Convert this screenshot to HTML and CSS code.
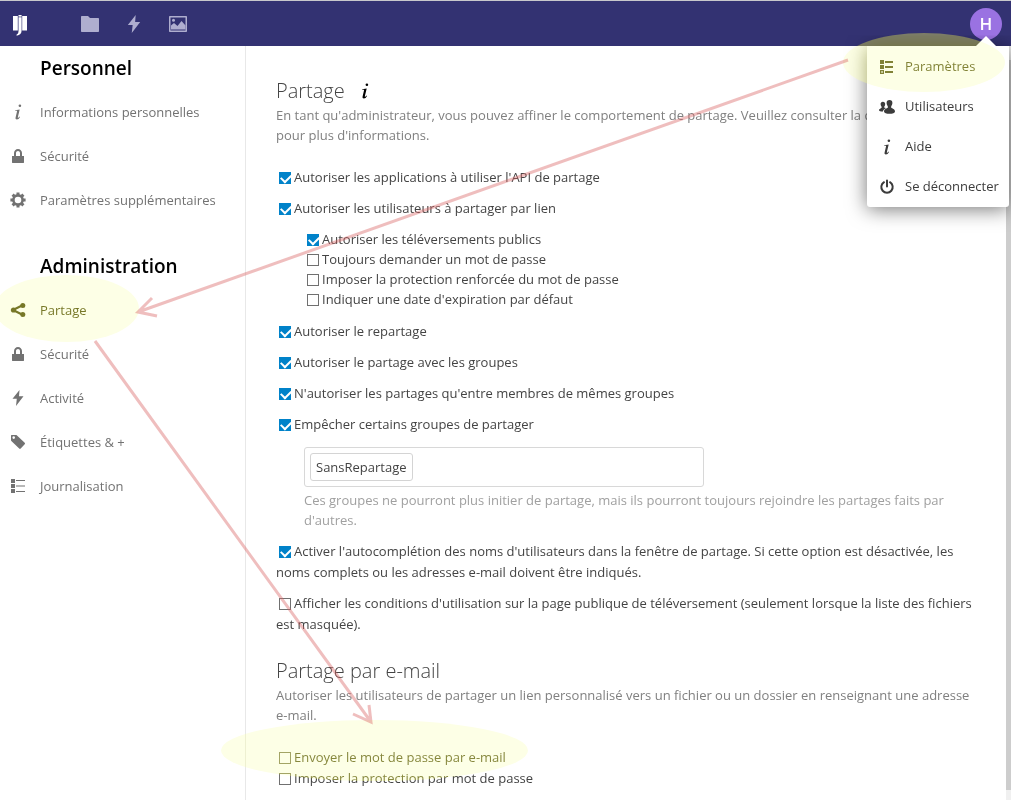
FILE: index.html
```html
<!DOCTYPE html>
<html lang="fr">
<head>
<meta charset="utf-8">
<title>Partage - Paramètres</title>
<link rel="stylesheet" href="styles.css">
</head>
<body>
<svg class="sprite" aria-hidden="true">
  <symbol id="i-info" viewBox="0 0 16 16"><circle cx="9.900" cy="1.800" r="1.300"/><path d="M5.200 6.200 9.700 5.400 7.900 13c-.2.8 0 1 .4.8.4-.2.8-.7 1.200-1.200l.5.4C9.100 14.700 8.100 15.500 6.900 15.500c-1.100 0-1.600-.8-1.300-2L7 7.600c.2-.7 0-.9-.5-.9H5.100z"/></symbol>
  <symbol id="i-lock" viewBox="0 0 16 16"><path d="M8 1C5.800 1 4 2.800 4 5v3H2v6.500c0 .3.2.5.5.5h11c.3 0 .5-.2.5-.5V8h-2V5c0-2.200-1.800-4-4-4zm0 2c1.100 0 2 .9 2 2v3H6V5c0-1.100.9-2 2-2z"/></symbol>
  <symbol id="i-gear" viewBox="0 0 16 16"><circle cx="8" cy="8" r="4.600" fill="none" stroke="currentColor" stroke-width="2.600"/><path fill="none" stroke="currentColor" stroke-width="3" d="M8 .4v2.800M8 12.800v2.800M.4 8h2.800M12.800 8h2.800M2.600 2.600l2 2M11.400 11.400l2 2M13.400 2.600l-2 2M4.600 11.400l-2 2"/></symbol>
  <symbol id="i-share" viewBox="0 0 16 16"><path fill="none" stroke="currentColor" stroke-width="2.200" d="M13 3 3 8l10 5"/><circle cx="3.500" cy="8" r="2.600"/><circle cx="12.800" cy="3.500" r="2.500"/><circle cx="12.800" cy="12.500" r="2.500"/></symbol>
  <symbol id="i-bolt" viewBox="0 0 16 16"><path d="M9.500 0 2.500 8.800h4.300L6 16l7.500-9.800H9z"/></symbol>
  <symbol id="i-tag" viewBox="0 0 16 16"><path fill-rule="evenodd" d="M1.600 1h4.200c.5 0 .8.100 1.200.5l7.700 7.300c.5.500.5 1 0 1.500l-4 4.200c-.5.500-1 .5-1.500 0L1.600 7.200C1.100 6.800 1 6.400 1 5.900V1.600C1 1.200 1.200 1 1.600 1zM3.700 2.300a1.300 1.300 0 1 0 0 2.600 1.300 1.300 0 0 0 0-2.600z"/></symbol>
  <symbol id="i-list" viewBox="0 0 16 16"><path d="M1 1h4v4H1zM1 6h4v4H1zM1 11h4v4H1zM6 2h9v1H6zM6 7.500h9v1H6zM6 13h9v1H6z"/></symbol>
  <symbol id="i-settings" viewBox="0 0 16 16"><path fill-rule="evenodd" d="M1 1h4v4H1zM1 6h4v4H1zM1 11h4v4H1zM2.300 12.300v1.500h1.500v-1.500zM6 2h8v2H6zM6 7h8v2H6zM6 12h8v2H6z"/></symbol>
  <symbol id="i-users" viewBox="0 0 16 16"><path d="M10.500 1C8.600 1 7.500 2.300 7.600 4c.1 1.500.6 2.500 1.200 3.200v1.600C8 9.600 5 10 5 12.400c0 1.400 2.500 2.300 5.500 2.300s5.500-.9 5.500-2.300C16 10 13 9.600 12.200 8.800V7.200c.6-.7 1.100-1.700 1.200-3.200.1-1.700-1-3-2.900-3z"/><path d="M3.900 2.800c-1.500 0-2.400 1-2.300 2.400.1 1.200.5 2 1 2.500v1C2 9.400 0 9.500 0 11.200c0 .8 1.500 1.300 4 1.300.2-1.700 1.500-2.700 3.200-3.500-.7-.1-1.700-.1-2-.5V7.700c.5-.5.9-1.300 1-2.500.1-1.400-.8-2.400-2.300-2.400z"/></symbol>
  <symbol id="i-power" viewBox="0 0 16 16"><path fill="none" stroke="currentColor" stroke-width="2" stroke-linecap="round" d="M8 1.500v6M5 3.200a5.700 5.700 0 1 0 6 0"/></symbol>
  <symbol id="i-folder" viewBox="0 0 18 16"><path d="M1 0h6l2 2h8c.6 0 1 .4 1 1v12c0 .6-.4 1-1 1H1c-.6 0-1-.4-1-1V1c0-.6.4-1 1-1z"/></symbol>
  <symbol id="i-picture" viewBox="0 0 18 16"><path fill-rule="evenodd" d="M1 0h16c.6 0 1 .4 1 1v14c0 .6-.4 1-1 1H1c-.6 0-1-.4-1-1V1c0-.6.4-1 1-1zM1.500 1.500v13h15v-13z"/><path d="M2 13.500V9.500l3-2.500 3.500 3 4-5 4 4.500v4z"/><circle cx="4.500" cy="4.300" r="1.500"/></symbol>
  <symbol id="i-logo" viewBox="0 0 16 24"><path d="M1 4h4.800v14.500H1zM10.200 4H15v14.500h-4.800zM6.500 5.300h3.100v13.200c0 2.900-1.600 4.700-5 5.300v-1.300c1.300-.6 1.900-1.600 1.900-3.500z"/><path d="M6.500 3h3.100v1.600H6.500z"/></symbol>
</svg>

<header class="topbar">
  <a class="logo" href="#" aria-label="Accueil"><svg><use href="#i-logo"/></svg></a>
  <nav class="apps" aria-label="Applications">
    <a href="#" aria-label="Fichiers"><svg><use href="#i-folder"/></svg></a>
    <a href="#" aria-label="Activité"><svg><use href="#i-bolt"/></svg></a>
    <a href="#" aria-label="Galerie"><svg><use href="#i-picture"/></svg></a>
  </nav>
  <div class="account">
    <button class="avatar" type="button">H</button>
    <nav class="menu" aria-label="Compte">
      <a href="#"><svg><use href="#i-settings"/></svg>Paramètres</a>
      <a href="#"><svg><use href="#i-users"/></svg>Utilisateurs</a>
      <a href="#"><svg><use href="#i-info"/></svg>Aide</a>
      <a href="#"><svg><use href="#i-power"/></svg>Se déconnecter</a>
    </nav>
  </div>
</header>

<div class="layout">
  <nav class="sidebar" aria-label="Paramètres">
    <h2>Personnel</h2>
    <ul>
      <li><a href="#"><svg><use href="#i-info"/></svg>Informations personnelles</a></li>
      <li><a href="#"><svg><use href="#i-lock"/></svg>Sécurité</a></li>
      <li><a href="#"><svg><use href="#i-gear"/></svg>Paramètres supplémentaires</a></li>
    </ul>
    <h2>Administration</h2>
    <ul>
      <li><a class="active" href="#"><svg><use href="#i-share"/></svg>Partage</a></li>
      <li><a href="#"><svg><use href="#i-lock"/></svg>Sécurité</a></li>
      <li><a href="#"><svg><use href="#i-bolt"/></svg>Activité</a></li>
      <li><a href="#"><svg><use href="#i-tag"/></svg>Étiquettes &amp; +</a></li>
      <li><a href="#"><svg><use href="#i-list"/></svg>Journalisation</a></li>
    </ul>
  </nav>

  <main class="content">
    <section>
      <h2>Partage <a class="help" href="#" aria-label="Documentation"><svg><use href="#i-info"/></svg></a></h2>
      <p class="hint">En tant qu'administrateur, vous pouvez affiner le comportement de partage. Veuillez consulter la documentation pour plus d'informations.</p>
      <div class="options">
        <label><input type="checkbox" checked>Autoriser les applications à utiliser l'API de partage</label>
        <label><input type="checkbox" checked>Autoriser les utilisateurs à partager par lien</label>
        <div class="suboptions">
          <label><input type="checkbox" checked>Autoriser les téléversements publics</label>
          <label><input type="checkbox">Toujours demander un mot de passe</label>
          <label><input type="checkbox">Imposer la protection renforcée du mot de passe</label>
          <label><input type="checkbox">Indiquer une date d'expiration par défaut</label>
        </div>
        <label><input type="checkbox" checked>Autoriser le repartage</label>
        <label><input type="checkbox" checked>Autoriser le partage avec les groupes</label>
        <label><input type="checkbox" checked>N'autoriser les partages qu'entre membres de mêmes groupes</label>
        <label><input type="checkbox" checked>Empêcher certains groupes de partager</label>
        <div class="groups">
          <div class="picker"><span class="chip">SansRepartage</span><input type="text" aria-label="Groupes exclus du partage"></div>
          <p>Ces groupes ne pourront plus initier de partage, mais ils pourront toujours rejoindre les partages faits par d'autres.</p>
        </div>
        <label><input type="checkbox" checked>Activer l'autocomplétion des noms d'utilisateurs dans la fenêtre de partage. Si cette option est désactivée, les noms complets ou les adresses e-mail doivent être indiqués.</label>
        <label><input type="checkbox">Afficher les conditions d'utilisation sur la page publique de téléversement (seulement lorsque la liste des fichiers est masquée).</label>
      </div>
    </section>
    <section>
      <h2>Partage par e-mail</h2>
      <p class="hint">Autoriser les utilisateurs de partager un lien personnalisé vers un fichier ou un dossier en renseignant une adresse e-mail.</p>
      <div class="options tight">
        <label><input type="checkbox">Envoyer le mot de passe par e-mail</label>
        <label><input type="checkbox">Imposer la protection par mot de passe</label>
      </div>
    </section>
  </main>
  <div class="scroll" aria-hidden="true"><div class="thumb"></div></div>
</div>

<div class="halo glow on-menu"></div><div class="halo tint on-menu"></div>
<div class="halo glow on-share"></div><div class="halo tint on-share"></div>
<div class="halo glow on-mail"></div><div class="halo tint on-mail"></div>
<svg class="arrows" width="1011" height="800" aria-hidden="true">
  <path d="M848 60 138 312M152 298 138 312 157 316"/>
  <path d="M95 341 371 722M353 714 371 722 369 705"/>
</svg>
</body>
</html>
```

FILE: styles.css
```css
* { box-sizing: border-box; }

body {
  margin: 0;
  min-height: 100vh;
  display: flex;
  flex-direction: column;
  position: relative;
  overflow: hidden;
  background: #fff;
  color: #444;
  font: 13px/21px "Open Sans", sans-serif;
}

h2, p, ul { margin: 0; padding: 0; font-weight: normal; }
ul { list-style: none; }
a { color: inherit; text-decoration: none; }
svg { fill: currentColor; width: 16px; height: 16px; flex: none; }
.sprite { position: absolute; width: 0; height: 0; }

/* Top bar */
.topbar {
  display: flex;
  align-items: center;
  height: 46px;
  padding: 0 9px 0 12px;
  border-top: 1px solid #c8c8cc;
  background: #333272;
  color: #fff;
}
.logo { display: flex; width: 56px; }
.logo svg { height: 24px; }
.apps { display: flex; color: #afaecf; }
.apps a { display: flex; justify-content: center; width: 44px; }
.apps svg { width: 18px; height: 18px; }
.account { position: relative; margin-left: auto; }
.avatar {
  display: block;
  width: 32px;
  height: 32px;
  padding: 0;
  border: 0;
  border-radius: 50%;
  background: #9a72e2;
  color: #fff;
  font: 600 17px/32px "Open Sans", sans-serif;
}
.menu {
  position: absolute;
  z-index: 2;
  top: 38px;
  right: -7px;
  width: 142px;
  padding-top: 1px;
  border-radius: 0 0 3px 3px;
  background: #fff;
  color: #3c3c3c;
  box-shadow: 0 2px 20px rgba(0, 0, 0, .55);
  clip-path: inset(-10px -10px -40px -40px);
}
.menu::before {
  content: "";
  position: absolute;
  right: 13px;
  bottom: 100%;
  border: 10px solid transparent;
  border-top: 0;
  border-bottom-color: #fff;
}
.menu a {
  display: flex;
  align-items: center;
  gap: 10px;
  height: 40px;
  padding-left: 12px;
  white-space: nowrap;
}

/* Page body */
.layout {
  flex: 1;
  display: grid;
  grid-template-columns: 246px 1fr 5px;
}
.sidebar { border-right: 1px solid #e8e8e8; color: #727272; }
.sidebar h2 {
  padding: 1px 0 0 40px;
  color: #000;
  font-size: 19px;
  font-weight: 600;
  line-height: 43px;
}
.sidebar ul { margin-bottom: 22px; }
.sidebar a {
  display: flex;
  align-items: center;
  gap: 14px;
  height: 44px;
  padding-left: 10px;
}
.sidebar .active { color: #2c2c2c; }

.content { padding: 30px 30px 10px; }
.content h2 {
  display: flex;
  align-items: center;
  gap: 12px;
  font-size: 20px;
  font-weight: 300;
  line-height: 29px;
}
.help { display: flex; color: #000; }
.hint { color: #808080; line-height: 20px; }
.options { display: grid; gap: 10px; padding: 22px 0 21px; }
.options.tight { gap: 0; padding-bottom: 0; }
.suboptions { display: grid; padding: 0 0 2px 28px; line-height: 20px; }
.groups { padding: 2px 0 1px 28px; color: #a0a0a0; line-height: 20px; }
.picker {
  display: flex;
  max-width: 400px;
  height: 40px;
  margin-bottom: 3px;
  padding: 5px;
  border: 1px solid #d8d8d8;
  border-radius: 3px;
}
.chip {
  padding: 0 5px;
  border: 1px solid #d4d4d4;
  border-radius: 3px;
  color: #444;
  line-height: 26px;
}
.picker input {
  flex: 1;
  min-width: 0;
  border: 0;
  outline: 0;
  background: none;
  font: inherit;
}

input[type="checkbox"] {
  appearance: none;
  position: relative;
  width: 12px;
  height: 12px;
  margin: 0 3px;
  border: 1px solid #707070;
  background: #fff;
  vertical-align: -2px;
}
input[type="checkbox"]:checked { border-color: #0082c9; background: #0082c9; }
input[type="checkbox"]:checked::before {
  content: "";
  position: absolute;
  left: 1px;
  top: 1px;
  width: 8px;
  height: 5px;
  border: solid #fff;
  border-width: 0 0 2px 2px;
  transform: rotate(-45deg);
}

.scroll { padding: 14px 0 10px; background: #f0f0f0; }
.thumb { height: 100%; background: #cdcdcd; }

/* Annotations laid over the page */
.halo { position: absolute; border-radius: 50%; pointer-events: none; z-index: 3; }
.glow { background: #5c5c00; mix-blend-mode: screen; }
.tint { background: #fdffe6; mix-blend-mode: multiply; }
.on-menu { left: 843px; top: 33px; width: 162px; height: 59px; }
.on-share { left: -6px; top: 275px; width: 145px; height: 67px; }
.on-mail { left: 221px; top: 720px; width: 307px; height: 61px; }
.arrows {
  position: absolute;
  z-index: 4;
  left: 0;
  top: 0;
  width: 1011px;
  height: 800px;
  fill: none;
  stroke: #d86464;
  stroke-opacity: .42;
  stroke-width: 3;
  pointer-events: none;
}
```
